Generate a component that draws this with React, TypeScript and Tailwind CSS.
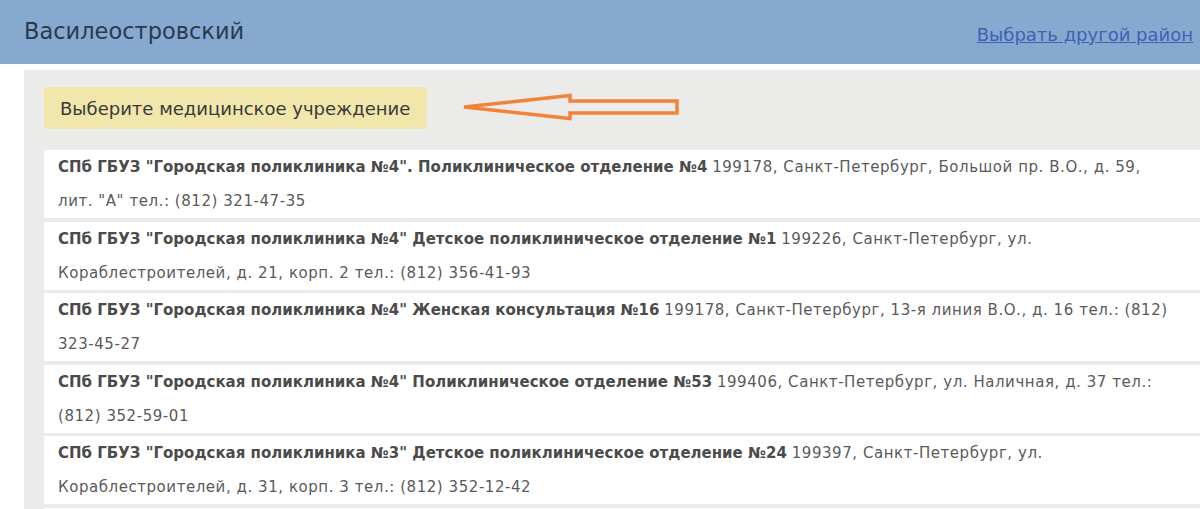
import React from "react";

type Clinic = {
  name: string;
  address: string;
};

const clinics: Clinic[] = [
  {
    name: 'СПб ГБУЗ "Городская поликлиника №4". Поликлиническое отделение №4',
    address: '199178, Санкт-Петербург, Большой пр. В.О., д. 59, лит. "А" тел.: (812) 321-47-35',
  },
  {
    name: 'СПб ГБУЗ "Городская поликлиника №4" Детское поликлиническое отделение №1',
    address: "199226, Санкт-Петербург, ул. Кораблестроителей, д. 21, корп. 2 тел.: (812) 356-41-93",
  },
  {
    name: 'СПб ГБУЗ "Городская поликлиника №4" Женская консультация №16',
    address: "199178, Санкт-Петербург, 13-я линия В.О., д. 16 тел.: (812) 323-45-27",
  },
  {
    name: 'СПб ГБУЗ "Городская поликлиника №4" Поликлиническое отделение №53',
    address: "199406, Санкт-Петербург, ул. Наличная, д. 37 тел.: (812) 352-59-01",
  },
  {
    name: 'СПб ГБУЗ "Городская поликлиника №3" Детское поликлиническое отделение №24',
    address: "199397, Санкт-Петербург, ул. Кораблестроителей, д. 31, корп. 3 тел.: (812) 352-12-42",
  },
  {
    name: 'СПб ГБУЗ "Городская поликлиника №3" Поликлиническое отделение №37',
    address: "199397, Санкт-Петербург, ул. Кораблестроителей, д. 35 тел.: (812) 352-12-42",
  },
];

function Arrow() {
  return (
    <svg width="222" height="30" viewBox="0 0 222 30" className="ml-[34px]">
      <path
        d="M3 14 L109 2.5 L109 8 L216 8 L216 20 L109 20 L109 25.5 Z"
        fill="none"
        stroke="#f0843a"
        strokeWidth="3.5"
        strokeLinejoin="miter"
      />
    </svg>
  );
}

export default function App() {
  return (
    <div className="h-[509px] w-[1200px] overflow-hidden bg-white font-['DejaVu_Sans',sans-serif]">
      <header className="flex h-[64px] items-center justify-between bg-[#88a9cf] pl-[24px] pr-[7px]">
        <h1 className="text-[22.5px] text-[#283a52]">Василеостровский</h1>
        <a href="#" className="mt-[4px] text-[18px] text-[#3c62b4] underline">
          Выбрать другой район
        </a>
      </header>

      <main className="ml-[24px] mt-[6px] w-[1250px] bg-[#ebebe9] pl-[20px] pt-[17px]">
        <div className="flex items-center">
          <div className="flex h-[42px] w-[383px] items-center rounded-[4px] bg-[#f1e6ab] pl-[16px] text-[18px] text-[#3a3a3a]">
            Выберите медицинское учреждение
          </div>
          <Arrow />
        </div>

        <ul className="mt-[21px] flex flex-col gap-[3.5px]">
          {clinics.map((c) => (
            <li
              key={c.name}
              className="w-[1160px] bg-white pl-[14px] pr-[31px] text-[15px] leading-[34px] text-[#5a5a5a]"
            >
              <b className="font-bold text-[#4b4b4b]">{c.name}</b>{" "}
              <span className="tracking-[0.55px]">{c.address}</span>
            </li>
          ))}
        </ul>
      </main>
    </div>
  );
}
